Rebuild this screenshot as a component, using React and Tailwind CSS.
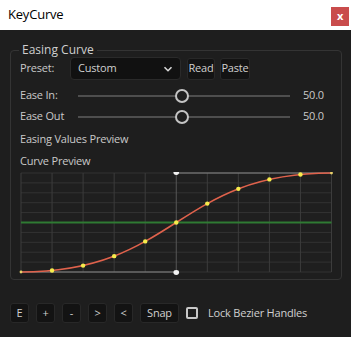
import React from 'react'

const X0 = 20
const X1 = 330.5
const YB = 272
const YT = 173

// ease curve with control points (0.5,0) (0.5,1)
function easeAt(x) {
  let lo = 0
  let hi = 1
  for (let i = 0; i < 40; i++) {
    const t = (lo + hi) / 2
    const xt = 1.5 * t * (1 - t) + t * t * t
    if (xt < x) lo = t
    else hi = t
  }
  const t = (lo + hi) / 2
  return 3 * t * t - 2 * t * t * t
}

function CurveGraph() {
  const w = X1 - X0
  const h = YB - YT
  const cols = Array.from({ length: 11 }, (_, i) => X0 + (i * w) / 10)
  const rows = Array.from({ length: 11 }, (_, i) => YT + (i * h) / 10)
  const dots = Array.from({ length: 9 }, (_, i) => {
    const x = (i + 1) / 10
    return [X0 + x * w, YB - easeAt(x) * h]
  })
  const mx = X0 + w / 2

  return (
    <svg width="314" height="103" viewBox="18 172 314 103" className="block -ml-[1px]">
      <rect x={X0} y={YT} width={w} height={h} fill="#1f1f1f" />
      {rows.map((y, i) => (
        <line key={'r' + i} x1={X0} x2={X1} y1={y} y2={y} stroke="#333333" strokeWidth="1" />
      ))}
      {cols.map((x, i) => (
        <line key={'c' + i} x1={x} x2={x} y1={YT} y2={YB} stroke={i === 5 ? '#575757' : '#3c3c3c'} strokeWidth="1" />
      ))}
      <line x1={X0} x2={X1} y1={(YT + YB) / 2} y2={(YT + YB) / 2} stroke="#2f7a33" strokeWidth="2" />
      {/* bezier handles */}
      <line x1={X0} x2={mx} y1={YB} y2={YB} stroke="#8a8a8a" strokeWidth="1" />
      <line x1={mx} x2={X1} y1={YT} y2={YT} stroke="#8a8a8a" strokeWidth="1" />
      <path
        d={`M ${X0} ${YB} C ${mx} ${YB}, ${mx} ${YT}, ${X1} ${YT}`}
        fill="none"
        stroke="#e0624c"
        strokeWidth="1.6"
      />
      {dots.map(([x, y], i) => (
        <circle key={'d' + i} cx={x} cy={y} r="2.2" fill="#f6ec4c" />
      ))}
      <circle cx={X0} cy={YB} r="1.4" fill="#e8d46a" />
      <circle cx={X1} cy={YT} r="1.4" fill="#e8d46a" />
      <ellipse cx={mx} cy={YT - 0.5} rx="2.8" ry="2.4" fill="#f2f2f2" />
      <ellipse cx={mx} cy={YB + 0.5} rx="2.8" ry="2.4" fill="#f2f2f2" />
    </svg>
  )
}

function Slider({ label, value }) {
  return (
    <div className="flex items-center h-[21px]">
      <span className="w-[58px] shrink-0">{label}</span>
      <div className="relative w-[212px] h-[12px] flex items-center">
        <div className="w-full h-[2px] bg-[#4e4e4e]" />
        <div className="absolute left-[97px] -top-[1px] w-[14px] h-[14px] rounded-full border-2 border-[#c4c4c4] bg-[#1e1e1e]" />
      </div>
      <span className="ml-[13px]">{value}</span>
    </div>
  )
}

function SmallButton({ children, className = '' }) {
  return (
    <button className={`h-[20px] rounded-[3px] bg-[#131313] border border-[#282828] text-[#d0d0d0] flex items-center justify-center ${className}`}>
      {children}
    </button>
  )
}

export default function App() {
  return (
    <div className="w-[351px] h-[337px] bg-[#1e1e1e] text-[#c9c9c9] text-[11px] tracking-[-0.2px] font-['Open_Sans',sans-serif] overflow-hidden">
      {/* title bar */}
      <div className="h-[30px] bg-white flex items-center justify-between pl-[8px] pr-[2px]">
        <span className="text-[13px] text-black">KeyCurve</span>
        <div className="w-[18px] h-[19px] mt-[3px] bg-[#c94c4c] text-white font-bold text-[11px] flex items-center justify-center leading-none pb-[2px]">
          x
        </div>
      </div>

      <fieldset className="ml-[10px] mt-[13px] w-[331px] h-[237px] border border-[#343434] rounded-[4px] pl-[9px] pr-[8px]">
        <legend className="-ml-[1px] px-[3px] text-[12px] leading-[14px] tracking-normal text-[#cfcfcf]">Easing Curve</legend>

        <div className="flex items-center h-[23px]">
          <span className="w-[50px] shrink-0">Preset:</span>
          <div className="w-[111px] h-[23px] rounded-[4px] bg-[#111111] border border-[#2a2a2a] flex items-center justify-between pl-[7px] pr-[6px] text-[#d0d0d0]">
            <span>Custom</span>
            <svg width="12" height="12" viewBox="0 0 12 12">
              <path d="M2.5 4.2 L6 7.7 L9.5 4.2" fill="none" stroke="#d8d8d8" strokeWidth="1.6" />
            </svg>
          </div>
          <SmallButton className="ml-[6px] w-[28px] h-[22px]">Read</SmallButton>
          <SmallButton className="ml-[5px] w-[30px] h-[22px]">Paste</SmallButton>
        </div>

        <div className="mt-[5px]">
          <Slider label="Ease In:" value="50.0" />
          <Slider label="Ease Out" value="50.0" />
        </div>

        <div className="h-[22px] flex items-center mt-[1px]">Easing Values Preview</div>
        <div className="h-[22px] flex items-center">Curve Preview</div>

        <CurveGraph />
      </fieldset>

      <div className="mt-[23px] ml-[10px] flex items-center gap-[7px] text-[#d0d0d0]">
        <SmallButton className="w-[19px]">E</SmallButton>
        <SmallButton className="w-[19px]">+</SmallButton>
        <SmallButton className="w-[19px]">-</SmallButton>
        <SmallButton className="w-[19px]">&gt;</SmallButton>
        <SmallButton className="w-[19px]">&lt;</SmallButton>
        <SmallButton className="w-[39px]">Snap</SmallButton>
        <div className="w-[12px] h-[12px] border-2 border-[#c8c8c8] rounded-[2px]" />
        <span className="ml-[3px]">Lock Bezier Handles</span>
      </div>
    </div>
  )
}
